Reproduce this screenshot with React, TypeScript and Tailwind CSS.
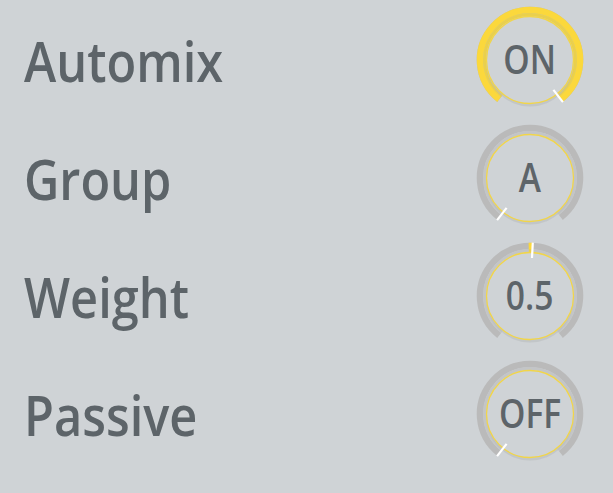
import React from "react";

const C = 56;
const MIN = -142;
const MAX = 142;

function pt(a: number, r: number) {
  const rad = (a * Math.PI) / 180;
  return [C + r * Math.sin(rad), C - r * Math.cos(rad)];
}

function arc(a0: number, a1: number, r: number) {
  const [x0, y0] = pt(a0, r);
  const [x1, y1] = pt(a1, r);
  const large = a1 - a0 > 180 ? 1 : 0;
  return `M ${x0.toFixed(2)} ${y0.toFixed(2)} A ${r} ${r} 0 ${large} 1 ${x1.toFixed(2)} ${y1.toFixed(2)}`;
}

type KnobProps = { label: string; angle: number; fill?: [number, number] | null };

function Knob({ label, angle, fill }: KnobProps) {
  const [lx0, ly0] = pt(angle, 38);
  const [lx1, ly1] = pt(angle, 53.5);
  return (
    <div className="relative w-[112px] h-[112px]">
      <svg width="112" height="112" viewBox="0 0 112 112" className="block">
        <path d={arc(MIN, MAX, 50)} stroke="#bababa" strokeWidth="6.5" fill="none" />
        <path d={arc(MIN, MAX, 45.5)} stroke="#c3c5c7" strokeWidth="3" fill="none" />
        {fill && (
          <>
            <path d={arc(fill[0], fill[1], 50)} stroke="#fbd83c" strokeWidth="6.5" fill="none" />
            <path d={arc(fill[0], fill[1], 45.5)} stroke="#ead04c" strokeWidth="3" fill="none" />
          </>
        )}
        <circle cx={C} cy={C + 2.5} r="44" fill="#b8bbbe" opacity="0.55" />
        <circle cx={C} cy={C} r="43.5" fill="#cfd3d6" stroke="#f1d54a" strokeWidth="1.3" />
        <line x1={lx0} y1={ly0} x2={lx1} y2={ly1} stroke="#ffffff" strokeWidth="2.2" />
      </svg>
      <div className="absolute inset-0 flex items-center justify-center pb-[3px]">
        <span className="block scale-x-[0.86] text-[39px] leading-none font-semibold text-[#5d6469] [font-family:'Open_Sans','Noto_Sans',sans-serif]">
          {label}
        </span>
      </div>
    </div>
  );
}

const rows: { name: string; knob: KnobProps }[] = [
  { name: "Automix", knob: { label: "ON", angle: MAX, fill: [MIN, MAX] } },
  { name: "Group", knob: { label: "A", angle: MIN, fill: null } },
  { name: "Weight", knob: { label: "0.5", angle: 3, fill: [-1.5, 3] } },
  { name: "Passive", knob: { label: "OFF", angle: MIN, fill: null } },
];

export default function App() {
  return (
    <div className="w-[613px] h-[493px] bg-[#cfd3d6] pt-px overflow-hidden">
      {rows.map((r) => (
        <div key={r.name} className="h-[118px] flex items-center">
          <div className="flex-1 pl-[24px]">
            <span className="block origin-left scale-x-[0.87] text-[56px] leading-none font-semibold text-[#5d6469] [font-family:'Open_Sans','Noto_Sans',sans-serif]">
              {r.name}
            </span>
          </div>
          <div className="mr-[27px]">
            <Knob {...r.knob} />
          </div>
        </div>
      ))}
    </div>
  );
}
